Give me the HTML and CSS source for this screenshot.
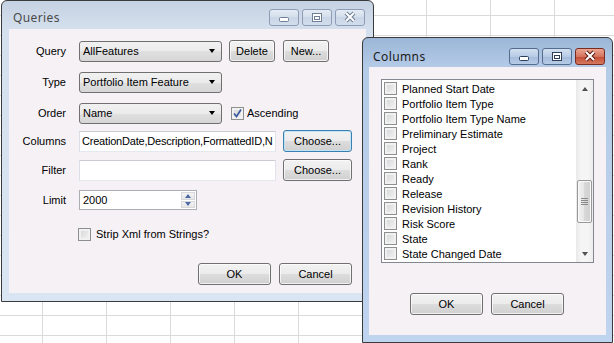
FILE: index.html
```html
<!DOCTYPE html>
<html lang="en">
<head>
    <meta charset="UTF-8">
    <title>Queries</title>
    <link rel="stylesheet" href="styles.css">
</head>
<body>
    <!-- Queries dialog (inactive) -->
    <div class="window queries">
        <div class="titlebar">
            <span class="title">Queries</span>
            <div class="caption-buttons">
                <span class="cap-btn">
                    <svg width="30" height="17" viewBox="0 0 30 17"><rect x="10.5" y="8.5" width="9" height="4" rx="1" fill="#fff" stroke="#6f7f96"/></svg>
                </span>
                <span class="cap-btn">
                    <svg width="30" height="17" viewBox="0 0 30 17"><rect x="10.5" y="4.5" width="9" height="8" fill="#fff" stroke="#6f7f96"/><rect x="12.5" y="7.5" width="5" height="3" fill="none" stroke="#6f7f96"/></svg>
                </span>
                <span class="cap-btn">
                    <svg width="30" height="17" viewBox="0 0 30 17"><path d="M11 4 L19 12 M19 4 L11 12" stroke="#6f7f96" stroke-width="4"/><path d="M11 4 L19 12 M19 4 L11 12" stroke="#fff" stroke-width="2"/></svg>
                </span>
            </div>
        </div>
        <div class="client query-form">
            <span class="field-label">Query</span>
            <div class="field">
                <div class="combo">AllFeatures<span class="arrow"></span></div>
                <button class="btn btn-small">Delete</button>
                <button class="btn btn-small new">New...</button>
            </div>

            <span class="field-label">Type</span>
            <div class="field">
                <div class="combo">Portfolio Item Feature<span class="arrow"></span></div>
            </div>

            <span class="field-label">Order</span>
            <div class="field">
                <div class="combo">Name<span class="arrow"></span></div>
                <label class="check ascending">
                    <span class="cb">
                        <svg width="11" height="11" viewBox="0 0 11 11"><path d="M2 5.5 L4.5 8.5 L9 1.5" fill="none" stroke="#3c5c9e" stroke-width="1.8"/></svg>
                    </span>
                    Ascending
                </label>
            </div>

            <span class="field-label">Columns</span>
            <div class="field">
                <div class="textbox tight">CreationDate,Description,FormattedID,N</div>
                <button class="btn btn-choose focused">Choose...</button>
            </div>

            <span class="field-label">Filter</span>
            <div class="field">
                <div class="textbox"></div>
                <button class="btn btn-choose">Choose...</button>
            </div>

            <span class="field-label">Limit</span>
            <div class="field">
                <div class="spin">
                    <span class="spin-value">2000</span>
                    <span class="spin-buttons">
                        <span class="spin-btn"><span class="tri-up"></span></span>
                        <span class="spin-btn"><span class="tri-down"></span></span>
                    </span>
                </div>
            </div>

            <span class="field-label"></span>
            <div class="field">
                <label class="check strip">
                    <span class="cb"></span>
                    Strip Xml from Strings?
                </label>
            </div>

            <div class="dialog-buttons">
                <button class="btn btn-wide">OK</button>
                <button class="btn btn-wide">Cancel</button>
            </div>
        </div>
    </div>

    <!-- Columns dialog (active) -->
    <div class="window columns active">
        <div class="titlebar">
            <span class="title">Columns</span>
            <div class="caption-buttons">
                <span class="cap-btn">
                    <svg width="30" height="17" viewBox="0 0 30 17"><rect x="10.5" y="8.5" width="9" height="4" rx="1" fill="#fff" stroke="#2f3f5a"/></svg>
                </span>
                <span class="cap-btn">
                    <svg width="30" height="17" viewBox="0 0 30 17"><rect x="10.5" y="4.5" width="9" height="8" fill="#fff" stroke="#2f3f5a"/><rect x="12.5" y="7.5" width="5" height="3" fill="none" stroke="#2f3f5a"/></svg>
                </span>
                <span class="cap-btn close">
                    <svg width="30" height="17" viewBox="0 0 30 17"><path d="M11 4 L19 12 M19 4 L11 12" stroke="#5a1a12" stroke-width="4"/><path d="M11 4 L19 12 M19 4 L11 12" stroke="#fff" stroke-width="2"/></svg>
                </span>
            </div>
        </div>
        <div class="client columns-body">
            <div class="listbox">
                <div class="list-items">
                    <div class="list-item"><span class="cb"></span>Planned Start Date</div>
                    <div class="list-item"><span class="cb"></span>Portfolio Item Type</div>
                    <div class="list-item"><span class="cb"></span>Portfolio Item Type Name</div>
                    <div class="list-item"><span class="cb"></span>Preliminary Estimate</div>
                    <div class="list-item"><span class="cb"></span>Project</div>
                    <div class="list-item"><span class="cb"></span>Rank</div>
                    <div class="list-item"><span class="cb"></span>Ready</div>
                    <div class="list-item"><span class="cb"></span>Release</div>
                    <div class="list-item"><span class="cb"></span>Revision History</div>
                    <div class="list-item"><span class="cb"></span>Risk Score</div>
                    <div class="list-item"><span class="cb"></span>State</div>
                    <div class="list-item"><span class="cb"></span>State Changed Date</div>
                </div>
                <div class="scrollbar">
                    <span class="scroll-arrow"><span class="tri-up dark"></span></span>
                    <span class="thumb">
                        <svg width="7" height="7" viewBox="0 0 7 7"><path d="M0 0.5 H7 M0 2.5 H7 M0 4.5 H7 M0 6.5 H7" stroke="#8a8a8a"/></svg>
                    </span>
                    <span class="scroll-arrow bottom"><span class="tri-down dark"></span></span>
                </div>
            </div>
            <div class="list-buttons">
                <button class="btn btn-wide">OK</button>
                <button class="btn btn-wide">Cancel</button>
            </div>
        </div>
    </div>
</body>
</html>
```

FILE: styles.css
```css
html, body {
    margin: 0;
    padding: 0;
}

body {
    width: 614px;
    height: 343px;
    overflow: hidden;
    position: relative;
    font-family: "Liberation Sans", Arial, sans-serif;
    font-size: 11px;
    color: #000;
    background-color: #fff;
    background-image:
        linear-gradient(to right, #dadada 1px, transparent 1px),
        linear-gradient(to bottom, #dadada 1px, transparent 1px);
    background-size: 64px 20px;
    background-position: 42px 15px;
}

/* window frames */
.window {
    position: absolute;
    box-sizing: border-box;
    border: 1px solid #3b3b3b;
    border-radius: 6px 6px 0 0;
    display: flex;
    flex-direction: column;
}

.queries {
    left: 1px;
    top: 0;
    width: 373px;
    height: 302px;
    background: linear-gradient(#c5d2e2 0, #d5e0ee 28px, #d9e5f3 100%);
}

.columns {
    left: 362px;
    top: 37px;
    width: 251px;
    height: 306px;
    background: linear-gradient(#9bb6d7 0, #b4cbe7 29px, #bfd4ee 100%);
}

.titlebar {
    display: flex;
    align-items: flex-start;
    height: 28px;
    flex-shrink: 0;
}

.columns .titlebar {
    height: 29px;
}

.title {
    font-family: "Noto Sans", "Liberation Sans", sans-serif;
    font-size: 12px;
    line-height: 15px;
    letter-spacing: 0.4px;
    margin: 9px 0 0 11px;
    color: #4a4a4a;
}

.columns .title {
    margin-top: 11px;
    margin-left: 10px;
    color: #1a1a1a;
}

.caption-buttons {
    display: flex;
    gap: 3px;
    margin: 8px 8px 0 auto;
}

.columns .caption-buttons {
    margin-top: 10px;
    margin-right: 7px;
}

.cap-btn {
    display: block;
    box-sizing: border-box;
    width: 30px;
    height: 17px;
    border: 1px solid #8d9db5;
    border-radius: 3px;
    background: linear-gradient(#e4ebf4, #d3deeb 50%, #c9d6e7 50%, #d3deec);
    overflow: hidden;
}

.cap-btn svg {
    display: block;
    margin: -1px;
}

.active .cap-btn {
    border-color: #566c8f;
    background: linear-gradient(#d2e0f1, #b7cbe5 50%, #a3bbdb 50%, #b6cbe6);
}

.active .cap-btn.close {
    border-color: #7b2c22;
    background: linear-gradient(#eba592, #d4735d 50%, #c24a33 50%, #d6785f);
}

.client {
    flex: 1;
    margin: 0 7px 8px 7px;
    background: #f5f1f5;
}

.columns .client {
    margin: 0 6px 7px 6px;
}

/* queries form */
.query-form {
    display: grid;
    grid-template-columns: 57px 1fr;
    grid-template-rows: 31px 31px 28px 29px 30px 34px 40px 22px;
    column-gap: 13px;
    align-content: start;
    padding: 11px 14px 0 0;
}

.field-label {
    height: 22px;
    line-height: 22px;
    text-align: right;
}

.field {
    display: flex;
    align-items: center;
    height: 22px;
}

.combo {
    box-sizing: border-box;
    width: 143px;
    height: 21px;
    display: flex;
    align-items: center;
    padding-left: 3px;
    border: 1px solid #707070;
    border-radius: 3px;
    background: linear-gradient(#f1f1f1, #ebebeb 50%, #e0e0e0 50%, #d6d6d6);
}

.arrow {
    margin-left: auto;
    margin-right: 6px;
    width: 0;
    height: 0;
    border-left: 3.5px solid transparent;
    border-right: 3.5px solid transparent;
    border-top: 4px solid #000;
}

.btn {
    box-sizing: border-box;
    height: 22px;
    padding: 0;
    font: inherit;
    color: #000;
    border: 1px solid #707070;
    border-radius: 3px;
    background: linear-gradient(#f2f2f2, #ebebeb 50%, #dddddd 50%, #d0d0d0);
    box-shadow: inset 0 0 0 1px rgba(255, 255, 255, 0.7);
}

.btn-small {
    width: 46px;
    margin-left: 7px;
}

.btn-small.new {
    margin-left: 8px;
}

.btn-choose {
    width: 69px;
    margin-left: 7px;
}

.btn-choose.focused {
    border-color: #3c7fb1;
    box-shadow: inset 0 0 0 1px #bfe3f7;
}

.btn-wide {
    width: 73px;
}

.textbox {
    box-sizing: border-box;
    width: 197px;
    height: 21px;
    line-height: 19px;
    padding-left: 2px;
    border: 1px solid;
    border-color: #c9ccd2 #e2e3ea #e3e9ef #dbdfe6;
    background: #fff;
    white-space: nowrap;
    overflow: hidden;
}

.textbox.tight {
    letter-spacing: -0.2px;
}

.spin {
    box-sizing: border-box;
    width: 118px;
    height: 20px;
    display: flex;
    border: 1px solid #abadb3;
    background: #fff;
}

.spin-value {
    line-height: 18px;
    padding-left: 3px;
}

.spin-buttons {
    margin-left: auto;
    display: flex;
    flex-direction: column;
    width: 14px;
    padding: 1px;
    gap: 1px;
}

.spin-btn {
    flex: 1;
    display: flex;
    align-items: center;
    justify-content: center;
    border: 1px solid #d6d8dc;
    background: linear-gradient(#f4f4f4, #e6e6e6);
}

.tri-up, .tri-down {
    width: 0;
    height: 0;
    border-left: 3.5px solid transparent;
    border-right: 3.5px solid transparent;
}

.tri-up {
    border-bottom: 4px solid #4d6aa6;
}

.tri-down {
    border-top: 4px solid #4d6aa6;
}

.tri-up.dark {
    border-bottom-color: #505050;
}

.tri-down.dark {
    border-top-color: #505050;
}

.check {
    display: flex;
    align-items: center;
    gap: 3px;
}

.ascending {
    margin-left: 9px;
}

.strip {
    margin-left: -1px;
    gap: 5px;
}

.cb {
    box-sizing: border-box;
    width: 13px;
    height: 13px;
    flex-shrink: 0;
    border: 1px solid #8e8f8f;
    background: linear-gradient(135deg, #d2d3d5, #f6f6f6);
    box-shadow: inset 0 0 0 2px #f1f1f1;
}

.cb svg {
    display: block;
}

.dialog-buttons {
    grid-column: 1 / -1;
    justify-self: end;
    display: flex;
    gap: 8px;
}

/* columns dialog */
.columns-body {
    display: flex;
    flex-direction: column;
    padding: 12px 0 0 12px;
}

.listbox {
    box-sizing: border-box;
    width: 213px;
    height: 184px;
    display: flex;
    border: 1px solid #828790;
    background: #fff;
}

.list-items {
    flex: 1;
    padding: 1px 0 0 2px;
}

.list-item {
    display: flex;
    align-items: center;
    gap: 5px;
    height: 15px;
    white-space: nowrap;
}

.scrollbar {
    width: 17px;
    display: flex;
    flex-direction: column;
    background: linear-gradient(to right, #e9e9e9, #f5f5f5 30%, #f5f5f5 70%, #ececec);
}

.scroll-arrow {
    height: 17px;
    display: flex;
    align-items: center;
    justify-content: center;
}

.scroll-arrow.bottom {
    margin-top: auto;
}

.thumb {
    box-sizing: border-box;
    margin: 83px 1px 0 1px;
    height: 43px;
    display: flex;
    align-items: center;
    justify-content: center;
    border: 1px solid #979797;
    border-radius: 2px;
    background: linear-gradient(to right, #f2f2f2, #e5e5e5 50%, #d8d8d8 50%, #cfcfcf);
    box-shadow: inset 0 0 0 1px #fafafa;
}

.list-buttons {
    display: flex;
    gap: 8px;
    margin: 30px 0 0 29px;
}
```
